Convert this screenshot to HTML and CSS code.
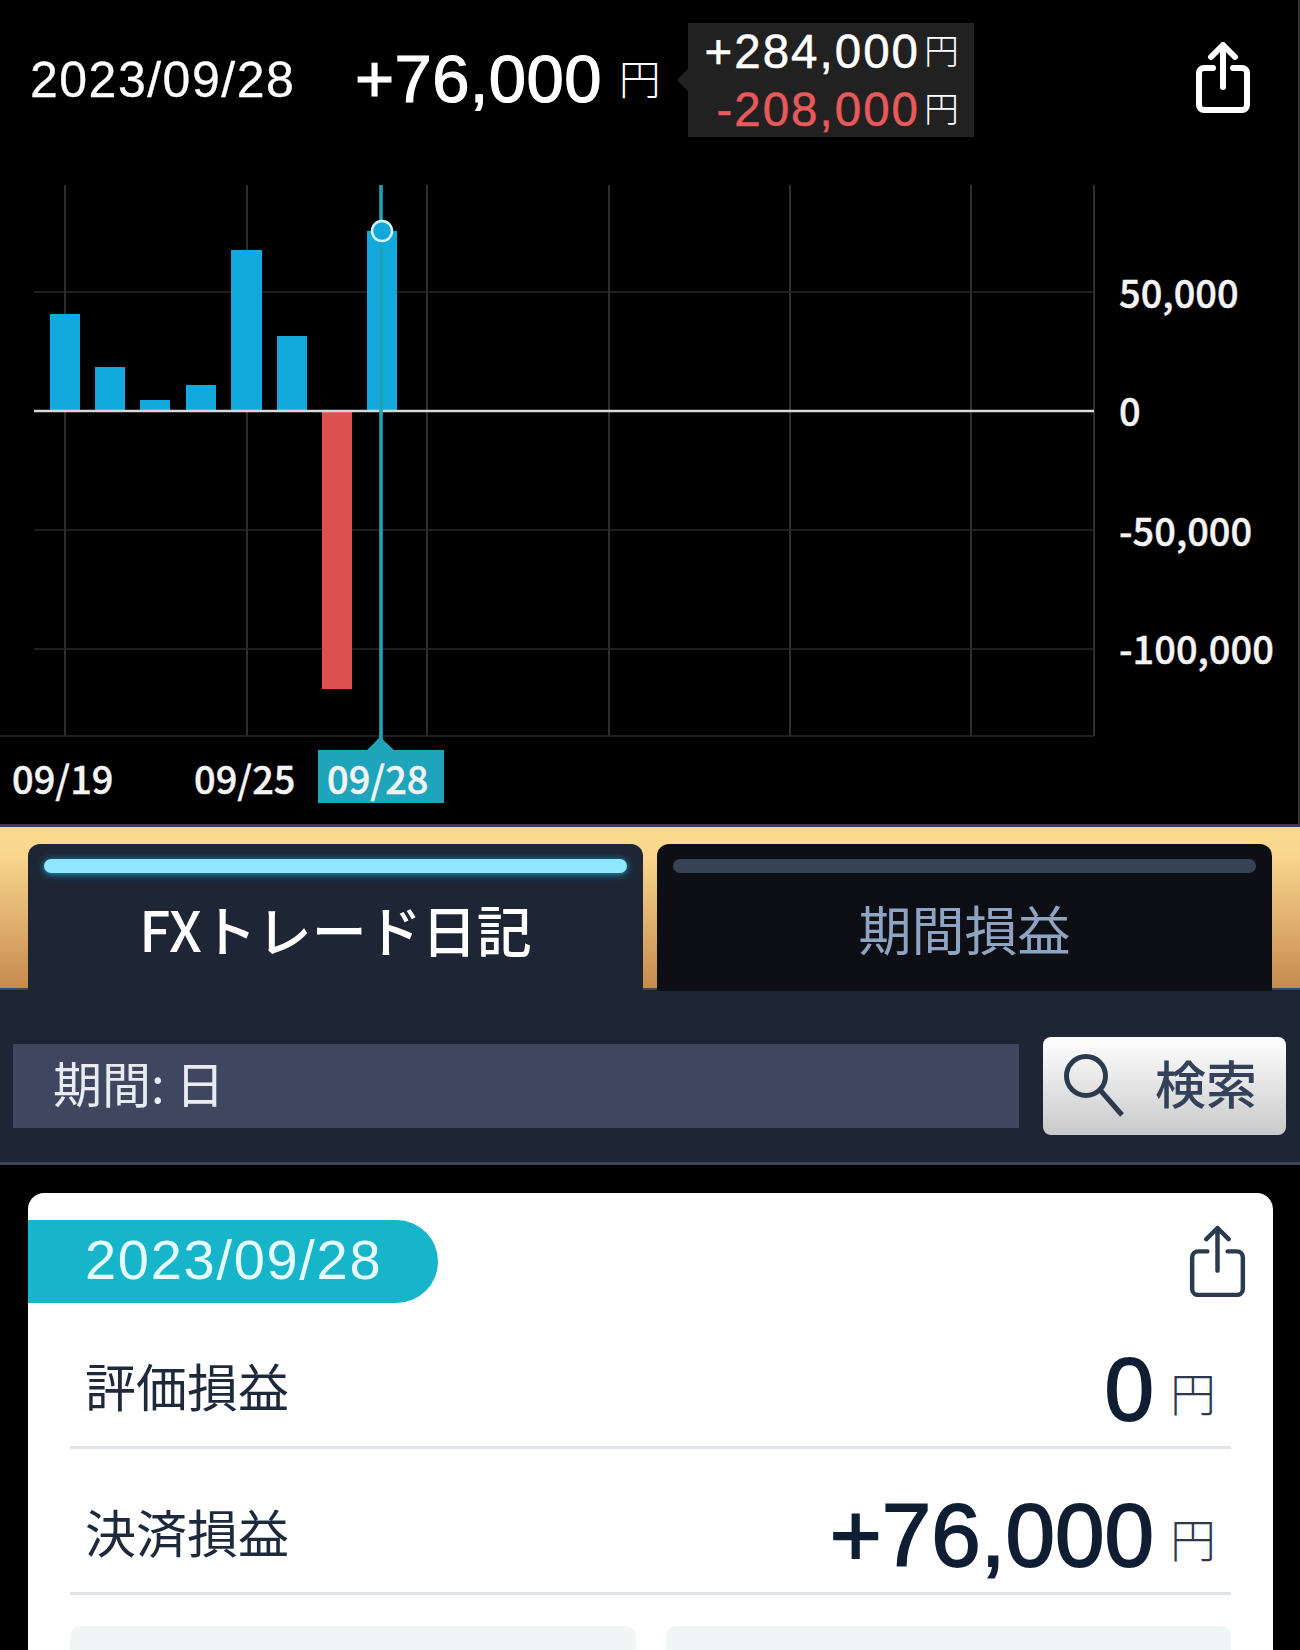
FILE: index.html
```html
<!DOCTYPE html>
<html lang="ja">
<head>
<meta charset="utf-8">
<title>FXトレード日記</title>
<link rel="stylesheet" href="styles.css">
</head>
<body>
<div class="top">
<header class="summary">
  <div class="summary-date">2023/09/28</div>
  <div class="summary-total"><span class="summary-num">+76,000</span><span class="summary-yen">円</span></div>
  <div class="bubble">
    <div class="bubble-row"><span class="bubble-num">+284,000</span><span class="bubble-yen">円</span></div>
    <div class="bubble-row"><span class="bubble-num loss">-208,000</span><span class="bubble-yen">円</span></div>
  </div>
  <svg class="share share-top" viewBox="0 0 54 71" aria-label="共有">
    <path d="M27 45V3M15 15 27 3l12 12M17 26H8a5 5 0 0 0-5 5v32a5 5 0 0 0 5 5h38a5 5 0 0 0 5-5V31a5 5 0 0 0-5-5h-9"/>
  </svg>
</header>

<svg class="chart" viewBox="0 160 1298 664">
  <g class="grid">
    <path d="M65 185V736M247 185V736M427 185V736M609 185V736M790 185V736M971 185V736M1094 185V736"/>
    <path class="grid-h" d="M34 292H1094M34 530H1094M34 649H1094M0 736H1094"/>
  </g>
  <g class="bars">
    <rect x="50" y="314" width="30" height="97"/>
    <rect x="95" y="367" width="30" height="44"/>
    <rect x="140" y="400" width="30" height="11"/>
    <rect x="186" y="385" width="30" height="26"/>
    <rect x="231" y="250" width="31" height="161"/>
    <rect x="277" y="336" width="30" height="75"/>
    <rect x="367" y="231" width="30" height="180"/>
    <rect class="bar-loss" x="322" y="411" width="30" height="278"/>
  </g>
  <path class="zero" d="M34 411H1094"/>
  <path class="cursor" d="M381 185V740"/>
  <circle class="dot" cx="382" cy="231" r="10"/>
  <path class="tag" d="M318 750H367L380 737 394 750H444V803H318Z"/>
  <g class="axis">
    <text x="12" y="794">09/19</text>
    <text x="194" y="794">09/25</text>
    <text x="327" y="794">09/28</text>
    <text x="1119" y="308">50,000</text>
    <text x="1119" y="426">0</text>
    <text x="1119" y="546">-50,000</text>
    <text x="1119" y="664">-100,000</text>
  </g>
</svg>
</div>

<nav class="tabs">
  <div class="tab tab-active"><span class="tab-bar"></span><span class="tab-label">FXトレード日記</span></div>
  <div class="tab"><span class="tab-bar"></span><span class="tab-label">期間損益</span></div>
</nav>

<section class="filter">
  <div class="filter-field">期間: 日</div>
  <button class="search" type="button">
    <svg class="search-icon" viewBox="0 0 64 64">
      <circle cx="24" cy="22" r="19.5"/>
      <path d="M39 37 60 61"/>
    </svg>
    <span class="search-label">検索</span>
  </button>
</section>

<main class="card">
  <div class="card-head">
    <div class="pill">2023/09/28</div>
    <svg class="share share-card" viewBox="0 0 54 71" aria-label="共有">
      <path d="M27 45V3M16 14 27 3l11 11M17 26H8a6 6 0 0 0-6 6v31a6 6 0 0 0 6 6h38a6 6 0 0 0 6-6V32a6 6 0 0 0-6-6h-9"/>
    </svg>
  </div>
  <div class="row">
    <span class="row-label">評価損益</span>
    <span class="row-value"><span class="row-num">0</span><span class="row-yen">円</span></span>
  </div>
  <div class="row">
    <span class="row-label">決済損益</span>
    <span class="row-value"><span class="row-num">+76,000</span><span class="row-yen">円</span></span>
  </div>
  <div class="boxes">
    <div class="box"></div>
    <div class="box"></div>
  </div>
</main>
</body>
</html>
```
FILE: styles.css
```css
* { box-sizing: border-box; }
html, body { margin: 0; height: 1650px; overflow: hidden; background: #000; }
body { font-family: "Liberation Sans", "Noto Sans CJK JP", sans-serif; color: #fff; }

.top { border-right: 2px solid #333; }
.summary { height: 160px; display: flex; align-items: center; padding: 0 46px 0 30px; }
.summary-date { font-size: 50px; letter-spacing: 1.5px; width: 325px; -webkit-text-stroke: 0.3px #fff; margin-bottom: 1px; }
.summary-total { display: block; width: 333px; white-space: nowrap; margin-bottom: 4px; }
.summary-num { font-size: 67px; letter-spacing: 0.4px; -webkit-text-stroke: 1.2px #fff; }
.summary-yen { font-size: 42px; margin-left: 17px; font-family: "Noto Sans CJK JP", sans-serif; font-weight: 300; vertical-align: 7px; }
.bubble { position: relative; width: 286px; height: 114px; background: #212121; padding-top: 5px; }
.bubble::before { content: ""; position: absolute; left: -11px; top: 46px; border: 11px solid transparent; border-left: 0; border-right-color: #212121; }
.bubble-row { display: block; text-align: right; white-space: nowrap; height: 47px; padding-right: 15px; margin-bottom: 11px; line-height: 47px; }
.bubble-num { font-size: 47.5px; letter-spacing: 2px; -webkit-text-stroke: 0.5px currentColor; }
.bubble-num.loss { color: #e85a5a; }
.bubble-yen { font-size: 35px; line-height: 1; margin-left: 4px; font-family: "Noto Sans CJK JP", sans-serif; font-weight: 300; vertical-align: 4px; }
.share { fill: none; stroke-linecap: round; stroke-linejoin: round; flex: none; }
.share-top { width: 54px; height: 71px; margin-left: auto; margin-bottom: 6px; margin-right: 2px; stroke: #fff; stroke-width: 6; }

.chart { display: block; width: 1298px; height: 664px; }
.grid path { fill: none; stroke: #3a3a3a; stroke-width: 1.6; }
.grid .grid-h { stroke: #282828; }
.bars rect { fill: #11a8dc; }
.bars .bar-loss { fill: #dd5050; }
.zero { stroke: #d8d8d8; stroke-width: 2.4; fill: none; }
.cursor { stroke: #1fa3b8; stroke-width: 3.6; fill: none; }
.dot { fill: #11a8dc; stroke: #d5f3fa; stroke-width: 2.5; }
.tag { fill: #1fa5bb; }
.axis text { font-family: "Noto Sans CJK JP", sans-serif; font-size: 38px; font-weight: 500; fill: #f4f4f4; stroke: #f4f4f4; stroke-width: 0.4px; }

.tabs { height: 164px; display: flex; gap: 14px; padding: 17px 28px 0 28px; border-top: 3px solid #3b3f48; background: linear-gradient(#fbd98f, #fad88f 15%, #c78a4f); position: relative; }
.tab { position: relative; height: 147px; flex: 1; border-radius: 12px 12px 0 0; background: #0e0f15; color: #8fa3c2; display: flex; flex-direction: column; align-items: center; padding: 15px 16px 0; }
.tab-active { background: #1e2636; color: #fff; z-index: 1; }
.tab-bar { display: block; width: 100%; height: 14px; border-radius: 7px; background: #374355; }
.tab-active .tab-bar { background: #8ee6ff; box-shadow: 0 1px 7px #1b9fd0; }
.tab-label { font-family: "Noto Sans CJK JP", sans-serif; font-size: 53px; line-height: 60px; margin-top: 25px; font-weight: 400; }
.tab-active .tab-label { font-weight: 500; font-size: 55px; }

.filter { height: 177px; display: flex; align-items: center; justify-content: space-between; padding: 46px 14px 26px 13px; background: #1e2636; border-top: 2px solid #38445c; border-bottom: 3px solid #3a4558; }
.filter-field { width: 1006px; height: 84px; background: #3e475f; color: #e8ebf0; font-family: "Noto Sans CJK JP", sans-serif; font-size: 49px; line-height: 76px; padding-left: 40px; }
.search { width: 243px; height: 98px; border: 0; padding: 0 0 0 19px; border-radius: 8px; background: linear-gradient(#fff, #c9c9c9); display: flex; align-items: center; color: #33415a; font-family: "Noto Sans CJK JP", sans-serif; font-size: 51px; font-weight: 500; }
.search-icon { width: 64px; height: 64px; fill: none; stroke: #2c3a50; stroke-width: 5; margin-right: 29px; }
.search-label { margin-bottom: 8px; }

.card { width: 1245px; margin: 28px 0 0 28px; background: #fff; border-radius: 16px 16px 0 0; color: #1e2a3c; padding-top: 27px; }
.card-head { display: flex; justify-content: space-between; height: 83px; padding-right: 27px; }
.pill { width: 410px; height: 83px; border-radius: 0 42px 42px 0; background: #17b5c9; color: #e6fbff; font-size: 56px; letter-spacing: 1.7px; line-height: 80px; padding-left: 57px; }
.share-card { width: 57px; height: 72px; margin-top: 5px; stroke: #2c3a50; stroke-width: 4.4; }
.row { height: 146px; margin: 0 42px; border-bottom: 3px solid #dfe3ea; display: flex; justify-content: space-between; align-items: center; padding: 20px 15px 0; }
.row-label { font-family: "Noto Sans CJK JP", sans-serif; font-size: 51px; color: #1e2a3c; }
.row-value { display: block; white-space: nowrap; margin-top: 10px; }
.row-num { font-size: 89px; color: #0f1e33; -webkit-text-stroke: 1.8px #0f1e33; }
.row-yen { font-family: "Noto Sans CJK JP", sans-serif; font-weight: 300; font-size: 46px; margin-left: 16px; color: #2c3a50; vertical-align: 9px; }
.boxes { display: flex; gap: 30px; margin: 31px 42px 0; }
.box { flex: 1; height: 60px; background: #f1f5f6; border-radius: 10px 10px 0 0; }
```
